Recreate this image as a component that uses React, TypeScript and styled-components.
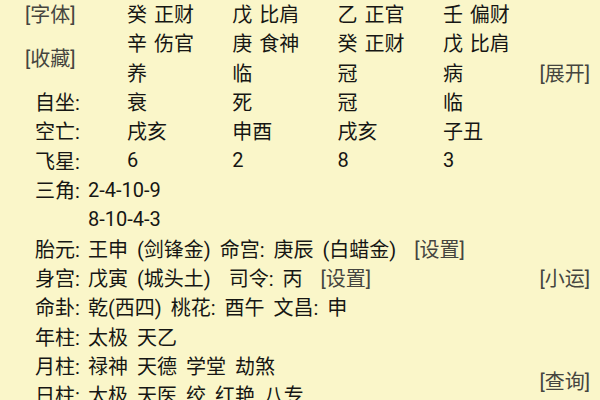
import React from 'react';
import styled, { createGlobalStyle } from 'styled-components';

interface Pillar {
  hidden: string[];
  stage: string;
  seat: string;
  empty: string;
  star: string;
}

const pillars: Pillar[] = [
  { hidden: ['癸 正财', '辛 伤官'], stage: '养', seat: '衰', empty: '戌亥', star: '6' },
  { hidden: ['戊 比肩', '庚 食神'], stage: '临', seat: '死', empty: '申酉', star: '2' },
  { hidden: ['乙 正官', '癸 正财'], stage: '冠', seat: '冠', empty: '戌亥', star: '8' },
  { hidden: ['壬 偏财', '戊 比肩'], stage: '病', seat: '临', empty: '子丑', star: '3' },
];

const GlobalStyle = createGlobalStyle`
  html, body {
    margin: 0;
    height: 100%;
    overflow: hidden;
    background: #faf6c9;
  }
  body {
    font-family: Roboto, "Noto Sans CJK SC", sans-serif;
    color: #161614;
  }
`

const Sheet = styled.div`
  display: grid;
  grid-template-columns: 102px repeat(3, 105.3px) 1fr 70px;
  grid-auto-rows: 29.33px;
  padding: 0 10px 0 25px;
  margin-top: -1px;
  font-size: 20px;
`

const Cell = styled.div<{ $row: number; $col: number }>`
  grid-row: ${({ $row }) => $row};
  grid-column: ${({ $col }) => $col};
  display: flex;
  align-items: center;
  white-space: pre;
  word-spacing: 2px;
`

const RowLabel = styled(Cell)`
  padding-left: 10px;
`

const Line = styled.div<{ $row: number }>`
  grid-row: ${({ $row }) => $row};
  grid-column: 1 / 6;
  display: flex;
  align-items: center;
  padding-left: 10px;
  white-space: pre;
  word-spacing: 4px;
`

const Label = styled.span`
  display: inline-block;
  width: 53px;
`

const Link = styled.span`
  color: #45453f;
  word-spacing: 0;
`

const SideButton = styled.div<{ $row: string; $col: number; $end?: boolean }>`
  grid-row: ${({ $row }) => $row};
  grid-column: ${({ $col }) => $col};
  align-self: center;
  justify-self: ${({ $end }) => ($end ? 'end' : 'start')};
  color: #45453f;
  white-space: pre;
`

const App: React.FC = () => {
  return (
    <>
      <GlobalStyle />
      <Sheet>
        <SideButton $row="1" $col={1}>[字体]</SideButton>
        <SideButton $row="2 / 4" $col={1}>[收藏]</SideButton>
        <SideButton $row="3" $col={6} $end>[展开]</SideButton>

        {pillars.map((p, i) => (
          <React.Fragment key={i}>
            <Cell $row={1} $col={i + 2}>{p.hidden[0]}</Cell>
            <Cell $row={2} $col={i + 2}>{p.hidden[1]}</Cell>
            <Cell $row={3} $col={i + 2}>{p.stage}</Cell>
            <Cell $row={4} $col={i + 2}>{p.seat}</Cell>
            <Cell $row={5} $col={i + 2}>{p.empty}</Cell>
            <Cell $row={6} $col={i + 2}>{p.star}</Cell>
          </React.Fragment>
        ))}
        <RowLabel $row={4} $col={1}>自坐:</RowLabel>
        <RowLabel $row={5} $col={1}>空亡:</RowLabel>
        <RowLabel $row={6} $col={1}>飞星:</RowLabel>

        <Line $row={7}><Label>三角:</Label>2-4-10-9</Line>
        <Line $row={8}><Label />8-10-4-3</Line>
        <Line $row={9}>
          <Label>胎元:</Label>王申 (剑锋金) 命宫: 庚辰 (白蜡金)  <Link>[设置]</Link>
        </Line>
        <Line $row={10}>
          <Label>身宫:</Label>戊寅 (城头土)  司令: 丙  <Link>[设置]</Link>
        </Line>
        <SideButton $row="10" $col={6} $end>[小运]</SideButton>
        <Line $row={11}><Label>命卦:</Label>乾(西四) 桃花: 酉午 文昌: 申</Line>
        <Line $row={12}><Label>年柱:</Label>太极 天乙</Line>
        <Line $row={13}><Label>月柱:</Label>禄神 天德 学堂 劫煞</Line>
        <Line $row={14}><Label>日柱:</Label>太极 天医 绞 红艳 八专</Line>
        <SideButton $row="13 / 15" $col={6} $end>[查询]</SideButton>
      </Sheet>
    </>
  );
};

export default App;
